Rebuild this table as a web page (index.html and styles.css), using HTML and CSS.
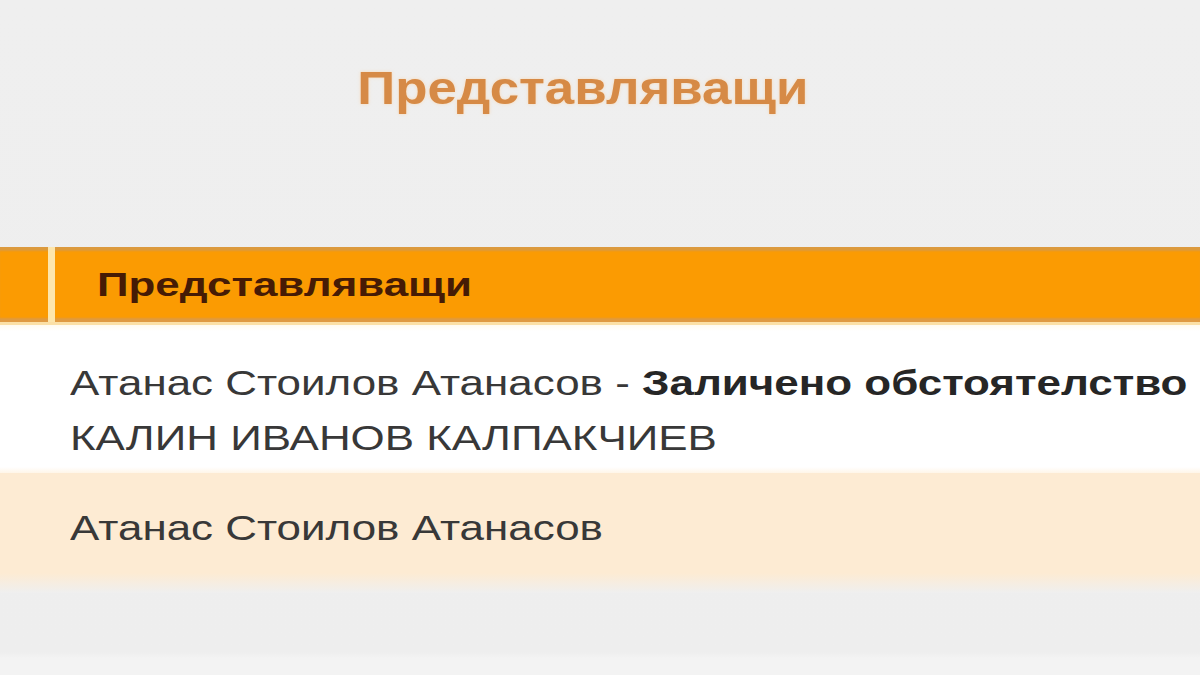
FILE: index.html
```html
<!DOCTYPE html>
<html lang="bg">
<head>
<meta charset="utf-8">
<title>Представляващи</title>
<link rel="stylesheet" href="styles.css">
</head>
<body>
<div class="page">
  <div class="title-wrap">
    <h1 class="title"><span class="wide">Представляващи</span></h1>
  </div>
  <div class="table">
    <div class="head">
      <div class="head-side"></div>
      <div class="head-main"><span class="wide head-text">Представляващи</span></div>
    </div>
    <div class="row row-white">
      <div class="line"><span class="wide">Атанас Стоилов Атанасов - <b>Заличено обстоятелство</b></span></div>
      <div class="line"><span class="wide">КАЛИН ИВАНОВ КАЛПАКЧИЕВ</span></div>
    </div>
    <div class="row row-beige">
      <div class="line"><span class="wide">Атанас Стоилов Атанасов</span></div>
    </div>
    <div class="fade"></div>
  </div>
</div>
</body>
</html>
```
FILE: styles.css
```css
html, body {
  margin: 0;
  padding: 0;
}
body {
  background: #efefef;
  font-family: "Liberation Sans", Arial, sans-serif;
  width: 1200px;
  height: 675px;
  overflow: hidden;
}
.page {
  display: flex;
  flex-direction: column;
  height: 675px;
  background: linear-gradient(#efefef 0, #eeeeee 652px, #f3f3f3 658px, #f3f3f3 100%);
}
.wide {
  display: inline-block;
  transform-origin: left center;
}
.title-wrap {
  height: 247px;
  display: flex;
  justify-content: center;
  padding-right: 34px;
  box-sizing: border-box;
}
.title {
  margin: 0;
  padding-top: 60px;
  font-size: 47px;
  font-weight: bold;
  color: #d68a46;
  line-height: 56px;
  text-shadow: 0 0 3px rgba(255, 205, 150, 0.7);
}
.title .wide {
  transform-origin: center center;
  transform: scaleX(1.123);
}
.table {
  display: flex;
  flex-direction: column;
  overflow: hidden;
  white-space: nowrap;
}
.head {
  display: flex;
  height: 80px;
  background: #fb9b02;
  box-shadow: inset 0 5px 2px -1px #dc9a3e, inset 0 -5px 2px -1px #df9a42;
  border-top: 2px solid #fdefc8;
  border-bottom: 3px solid #fbe0a6;
  box-sizing: border-box;
  margin-top: -2px;
}
.head-side {
  width: 48px;
  border-right: 7px solid #fde6ac;
}
.head-main {
  flex: 1;
  padding-left: 42px;
  display: flex;
  align-items: center;
  font-size: 33px;
  font-weight: bold;
  color: #461b05;
}
.head-text {
  transform: scaleX(1.33);
}
.row {
  padding-left: 70px;
  color: #383838;
  font-size: 35px;
  line-height: 55px;
  box-sizing: border-box;
}
.row .wide {
  transform: scaleX(1.255);
}
.row b {
  color: #262626;
}
.row-white {
  background: linear-gradient(#fffbf0 0, #ffffff 6px, #ffffff 142px, #fff6e8 100%);
  height: 148px;
  padding-top: 30px;
}
.row-beige {
  background: #fdebd3;
  height: 100px;
  padding-top: 27px;
}
.fade {
  height: 20px;
  background: linear-gradient(#fdebd3, #efefef);
}
```
